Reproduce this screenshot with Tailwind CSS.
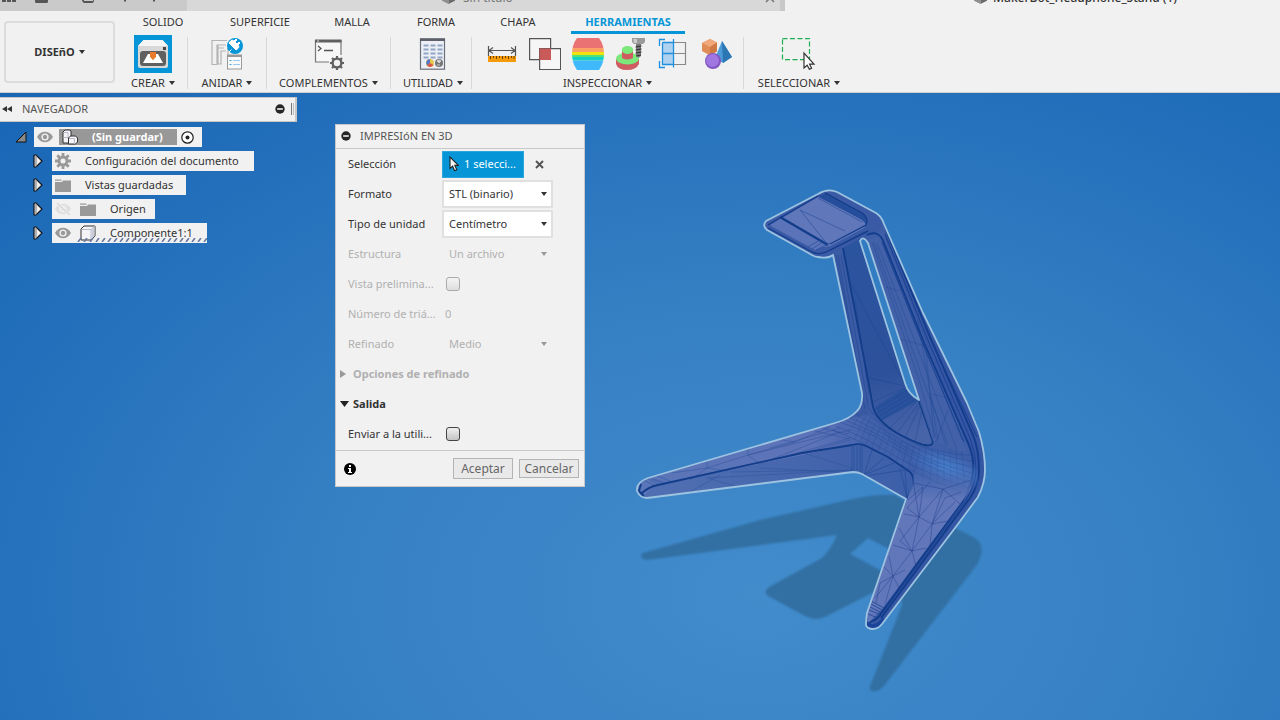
<!DOCTYPE html>
<html lang="es">
<head>
<meta charset="utf-8">
<meta name="viewport" content="width=device-width, initial-scale=1">
<title>Impresión en 3D</title>
<script src="https://cdn.jsdelivr.net/npm/@tailwindcss/browser@4"></script>
</head>
<body class="flex h-screen flex-col overflow-hidden bg-[#f1f1f1] font-['Noto_Sans','Open_Sans',sans-serif] text-[11px] leading-4 text-[#333]">

<!-- Shared symbols -->
<svg class="hidden" aria-hidden="true">
  <symbol id="caret" viewBox="0 0 6 4"><path d="M0 0h6L3 4z" fill="currentColor"/></symbol>
  <symbol id="eye" viewBox="0 0 16 12"><path d="M0 6C2 2.400 5 .8 8 .8s6 1.600 8 5.200c-2 3.600-5 5.200-8 5.200S2 9.600 0 6z" fill="currentColor"/><circle cx="8" cy="6" r="3.600" fill="#f1f1f1"/><circle cx="8" cy="6" r="2.200" fill="currentColor"/></symbol>
  <symbol id="folder" viewBox="0 0 16 13"><path d="M0 .5h6.500v1.300H0zM0 3h7l1-1.500h8V13H0z" fill="#999"/></symbol>
  <symbol id="expand" viewBox="0 0 10 14"><path d="M1 1.500Q1 1 2 1h1l6 6-6 6H2q-1 0-1-.5z" fill="#eee" stroke="#111" stroke-width="1.200"/><path d="M3 1.500v11" stroke="#777"/></symbol>
  <symbol id="minus" viewBox="0 0 10 10"><circle cx="5" cy="5" r="4.700" fill="#262626"/><path d="M2.200 5h5.600" stroke="#f1f1f1" stroke-width="1.600"/></symbol>
  <symbol id="pointer" viewBox="0 0 10 16"><path d="M1 1v11.500l2.600-2.300 2 4.600 2.200-1-2-4.400H9.400z" fill="#f4f4f4" stroke="#222" stroke-width="1.100"/></symbol>
  <symbol id="doc" viewBox="0 0 13 13"><path d="M6.500 6.500v6.500L0 9.800V3z" fill="#8f8f8f"/><path d="M6.500 6.500v6.500L13 9.800V3z" fill="#6b6b6b"/><path d="M6.500 0L13 3 6.500 6.500 0 3z" fill="#c2c2c2"/></symbol>
</svg>

<header class="shrink-0 border-b border-[#d0cfcc]">
  <!-- Document tabs, scrolled partly out of view -->
  <div class="flex h-[11px] items-end overflow-hidden text-xs">
    <div class="flex h-full w-[187px] items-start bg-[#cacaca] text-[#555]">
      <svg class="h-[5px] w-[187px]" viewBox="0 0 187 5" fill="currentColor"><path d="M2 0h4v2H2zM7 0h4v2H7zM12 0h4v2h-4zM35 0h13v1.500q0 1.500-1.500 1.500h-10Q35 3 35 1.500zM82 0h2v1h9V0h1q0 3-2 3h-8q-2-1-2-3zM124 0h2v1.500h-2zM153 0h2v1.500h-2z"/></svg>
    </div>
    <div class="flex h-full w-[593px] items-end justify-between bg-[#d8d8d8] pr-[5px] pl-[255px] text-[#777]">
      <a href="#" class="flex items-center gap-2 whitespace-nowrap leading-[27px]"><svg class="size-[13px]"><use href="#doc"/></svg>Sin título</a>
      <button class="leading-[27px]" aria-label="Cerrar"><svg class="mb-2 block size-[10px]" viewBox="0 0 10 10" stroke="#777" stroke-width="1.500"><path d="M1 1l8 8M9 1L1 9"/></svg></button>
    </div>
    <div class="h-full w-[5px] bg-[#c8c8c8]"></div>
    <div class="flex h-full flex-1 items-end pl-[189px]"><a href="#" class="flex items-center gap-[6px] whitespace-nowrap leading-[27px] font-medium"><svg class="size-[13px]"><use href="#doc"/></svg>MakerBot_Headphone_Stand (1)</a></div>
  </div>

  <div class="flex">
    <button class="mt-[10px] ml-1 flex h-[62px] w-[111px] shrink-0 items-center justify-center gap-1 rounded-[4px] border-2 border-[#dcdcdc] pb-px font-bold">DISEñO<svg class="h-1 w-[6px]"><use href="#caret"/></svg></button>
    <div class="flex-1">
      <nav class="flex h-[23px] gap-[22px] pl-4 whitespace-nowrap">
        <a href="#" class="w-16 pt-[3px] text-center">SOLIDO</a>
        <a href="#" class="w-[86px] pt-[3px] text-center">SUPERFICIE</a>
        <a href="#" class="w-[54px] pt-[3px] text-center">MALLA</a>
        <a href="#" class="w-[70px] pt-[3px] text-center">FORMA</a>
        <a href="#" class="w-[50px] pt-[3px] text-center">CHAPA</a>
        <a href="#" class="ml-[6px] w-[114px] border-b-[3px] border-[#0696d7] pt-[3px] text-center font-bold text-[#0696d7]">HERRAMIENTAS</a>
      </nav>

      <div class="flex h-[58px] pl-1">
        <section class="flex w-[68px] flex-col items-center justify-between pb-px">
          <button class="mt-px size-[38px] bg-[#0696d7]" aria-label="Impresión en 3D"><svg viewBox="0 0 38 38"><path d="M9.500 5h19L34 11v20q0 2-2 2H6q-2 0-2-2V11z" fill="#d8d8d8"/><path d="M9.500 5h19L34 11H4z" fill="#f6f6f6"/><rect x="6" y="16" width="26" height="15" rx="3" fill="#606060"/><rect x="29" y="12" width="3" height="3" fill="#444"/><path d="M9 28l5-9h2l3 6 3-6h2l5 9z" fill="#fff"/><path d="M16 17h6v5l-3 3-3-3z" fill="#e87a2a"/></svg></button>
          <button class="flex items-center gap-1">CREAR<svg class="h-1 w-[6px]"><use href="#caret"/></svg></button>
        </section>
        <div class="my-[3px] w-px bg-[#d8d8d8]"></div>
        <section class="flex w-[78px] flex-col items-center justify-between pb-px">
          <button class="mt-1 size-8" aria-label="Anidar"><svg viewBox="0 0 32 32" fill="none"><path d="M16 2.500H1v24h5V7h9M7 26.500V7.500M13 10H7v16h3V13h5M17 10v13" stroke="#b4b4b4" stroke-width="1.200"/><rect x="16.500" y="17" width="14" height="14" fill="#fafafa" stroke="#999"/><path d="M16.500 18h14" stroke="#999" stroke-width="2"/><path d="M18.500 22.500h2M18.500 26.500h2" stroke="#40a0e0"/><path d="M22 22.500h7M22 26.500h7" stroke="#9cc8ee"/><circle cx="24" cy="8" r="8" fill="#0696d7"/><path d="M18 14l2.500-2.500M20 7l5 5q2-1 3-3l-1-2 2-2-1-1-2 2-2-2 2-2-1-1-2 2-2-1q-2 1-3 3z" fill="#fff" stroke="#fff"/></svg></button>
          <button class="flex items-center gap-1">ANIDAR<svg class="h-1 w-[6px]"><use href="#caret"/></svg></button>
        </section>
        <div class="my-[3px] w-px bg-[#d8d8d8]"></div>
        <section class="flex w-[123px] flex-col items-center justify-between pb-px">
          <button class="mt-1 size-8" aria-label="Secuencias de comandos y complementos"><svg viewBox="0 0 32 32" fill="none"><path d="M16 24H2.500V2.500h25.500V17" fill="#f7f7f7" stroke="#777" stroke-width="1.200"/><path d="M2 3h26.500" stroke="#606060" stroke-width="3"/><path d="M4 3h2" stroke="#ddd"/><path d="M5 8l3 2.500L5 13M11 12.500h9" stroke="#555" stroke-width="1.300"/><circle cx="24" cy="25" r="4.400" fill="#f1f1f1" stroke="#606060" stroke-width="2.400"/><path d="M24 18v2.500M24 29.500V32M17 25h2.500M28.500 25H31M19 20l1.800 1.800M27.200 28.200L29 30M29 20l-1.800 1.800M20.800 28.200L19 30" stroke="#606060" stroke-width="2.200"/></svg></button>
          <button class="flex items-center gap-1">COMPLEMENTOS<svg class="h-1 w-[6px]"><use href="#caret"/></svg></button>
        </section>
        <div class="my-[3px] w-px bg-[#d8d8d8]"></div>
        <section class="flex w-20 flex-col items-center justify-between pb-px pl-1">
          <button class="mt-1 size-8" aria-label="Utilidad"><svg viewBox="0 0 32 32"><rect x="3.500" y=".7" width="24" height="30.500" fill="#eceff5" stroke="#6b6f78" stroke-width="1.200"/><path d="M3 2h25" stroke="#5d6068" stroke-width="2"/><path d="M6.500 7.500h20M6.500 11.500h20M6.500 15.500h20M6.500 19.500h20" stroke="#93a5c6" stroke-width="1.800" stroke-dasharray="5 2"/><circle cx="13" cy="25" r="4" fill="#e8c84c"/><path d="M13 25v-4a4 4 0 0 0-3 6.500z" fill="#5578c8"/><path d="M13 25l3.500 2a4 4 0 0 1-6.500.5z" fill="#d8574c"/><circle cx="22" cy="25" r="4" fill="#777"/><path d="M20 23q2-2 4 0l-2 2zM20 27h3" fill="#ddd" stroke="#ccc"/></svg></button>
          <button class="flex items-center gap-1">UTILIDAD<svg class="h-1 w-[6px]"><use href="#caret"/></svg></button>
        </section>
        <div class="my-[3px] w-px bg-[#d8d8d8]"></div>
        <section class="flex w-[271px] flex-col items-center justify-between pb-px">
          <div class="mt-1 flex gap-[11px] pl-1">
            <button class="size-8" aria-label="Medir"><svg viewBox="0 0 32 32" fill="none"><path d="M2.500 8v10M29.500 8v10M3 12.500h26M7 9.500l-4 3 4 3M25 9.500l4 3-4 3" stroke="#555" stroke-width="1.200"/><path d="M2 18h28v6H2z" fill="#f59b0b"/><path d="M4.500 18v3M7.500 18v2M10.500 18v3M13.500 18v2M16.500 18v3M19.500 18v2M22.500 18v3M25.500 18v2M28 18v3" stroke="#6b4300"/></svg></button>
            <button class="size-8" aria-label="Interferencia"><svg viewBox="0 0 32 32"><path d="M.6.6h21v21H.6z" fill="#f6f6f6" stroke="#555" stroke-width="1.200"/><path d="M10.600 10.600h21v21h-21z" fill="#f6f6f6" stroke="#555" stroke-width="1.200"/><path d="M10.500 10.500H22V22H10.500z" fill="#c95a5a"/></svg></button>
            <button class="size-8" aria-label="Análisis de curvatura"><svg viewBox="0 0 32 32"><clipPath id="barrel"><path d="M5 0h22q5 7 5 16t-5 16H5Q0 25 0 16T5 0z"/></clipPath><g clip-path="url(#barrel)"><path d="M0 0h32v10H0z" fill="#ea7272"/><path d="M0 10h32v4H0z" fill="#fda163"/><path d="M0 14h32v3H0z" fill="#f0e20c"/><path d="M0 17h32v2H0z" fill="#50e07a"/><path d="M0 19h32v3.500H0z" fill="#12d3c3"/><path d="M0 22.500h32V32H0z" fill="#40b8fc"/></g></svg></button>
            <button class="size-8" aria-label="Análisis de sección"><svg viewBox="0 0 32 32"><path d="M1 21v5q2 6 11 6t12-6v-5z" fill="#cf5c60"/><ellipse cx="12.500" cy="20.500" rx="11.500" ry="6" fill="#7be87b"/><path d="M7 12v8q5 3 11 0v-8z" fill="#cf5c60"/><ellipse cx="12.500" cy="12" rx="5.800" ry="4" fill="#7be87b"/><path d="M17 0h13v4l-2 2h-9l-2-2z" fill="#9a9a9a"/><path d="M21 6h5v12l-2.500 2-2.500-2z" fill="#777"/><path d="M20.500 9l6-1M20.500 12l6-1M20.500 15l6-1M21 18l5-1" stroke="#333"/><path d="M18 1h4v4h-3z" fill="#ccc"/></svg></button>
            <button class="size-8" aria-label="Plano de simetría"><svg viewBox="0 0 32 32" fill="none"><path d="M4.500 4.500h11v22h-11z" fill="#aed2f0"/><path d="M16 4.500h11.500v22H16M16 15.500h11.500" stroke="#888" stroke-width="1.200"/><path d="M4.500 4.500h11M4.500 4.500v22h11M4.500 15.500h11M15.500 1v28.500M7 1.500H1.500V8M7 29.500H1.500V23" stroke="#1f8fe0" stroke-width="1.300"/></svg></button>
            <button class="size-8" aria-label="Propiedades"><svg viewBox="0 0 32 32"><path d="M9 1l7 3.500v9L8 17l-7-4V5z" fill="#e08c56"/><path d="M9 1l7 3.500L9 9 1 5z" fill="#f0a87a"/><path d="M9 9v8l7-3.500v-9z" fill="#cf7a44"/><path d="M21 3l10 16-9 6-8-5z" fill="#4b9bd8"/><path d="M21 3l10 16-9 6z" fill="#2d76b4"/><circle cx="12" cy="23" r="8" fill="#8255c0"/><circle cx="11.500" cy="22.500" r="6.500" fill="#a076e0"/></svg></button>
          </div>
          <button class="flex items-center gap-1">INSPECCIONAR<svg class="h-1 w-[6px]"><use href="#caret"/></svg></button>
        </section>
        <div class="my-[3px] w-px bg-[#d8d8d8]"></div>
        <section class="flex w-[110px] flex-col items-center justify-between pb-px">
          <button class="mt-1 h-8 w-9" aria-label="Seleccionar"><svg viewBox="0 0 36 32" fill="none"><path d="M1.500.6h27v21h-27z" stroke="#1fae50" stroke-width="1.200" stroke-dasharray="5 2.500"/><path d="M23 15v15l3.200-2.700 2.200 4 2.200-1.100-2-4H33z" fill="#fff" stroke="#333" stroke-width="1.200"/></svg></button>
          <button class="flex items-center gap-1">SELECCIONAR<svg class="h-1 w-[6px]"><use href="#caret"/></svg></button>
        </section>
      </div>
    </div>
  </div>
</header>

<main class="relative min-h-0 flex-1 overflow-hidden bg-[radial-gradient(ellipse_76%_104%_at_59%_80%,#428ccc_0%,#357fc3_45%,#226eba_85%,#1564b4_115%)]">

  <!-- 3D model view -->
  <svg class="absolute inset-0 h-full w-full" viewBox="0 93 1280 627" aria-label="Soporte para auriculares" fill="none">
    <defs>
      <linearGradient id="inner" x1="850" y1="250" x2="900" y2="440" gradientUnits="userSpaceOnUse"><stop stop-color="#2b549f"/><stop offset=".65" stop-color="#2d519b"/><stop offset="1" stop-color="#4864a9"/></linearGradient>
      <linearGradient id="under" x1="660" y1="490" x2="910" y2="470" gradientUnits="userSpaceOnUse"><stop stop-color="#506fb2"/><stop offset="1" stop-color="#3d5fa9"/></linearGradient>
      <radialGradient id="shine" cx="0" cy="0" r="1" gradientUnits="userSpaceOnUse" gradientTransform="translate(948 468) rotate(20) scale(42 16)"><stop stop-color="#4880cb"/><stop offset="1" stop-color="#4880cb" stop-opacity="0"/></radialGradient>
      <linearGradient id="top" x1="640" y1="0" x2="870" y2="0" gradientUnits="userSpaceOnUse"><stop stop-color="#5a75b8"/><stop offset=".75" stop-color="#5d73b8"/><stop offset="1" stop-color="#4362ac"/></linearGradient>
      <linearGradient id="front" x1="0" y1="465" x2="0" y2="500" gradientUnits="userSpaceOnUse"><stop stop-color="#4d70b6" stop-opacity="0"/><stop offset="1" stop-color="#6177ba"/></linearGradient>
      <filter id="soft"><feGaussianBlur stdDeviation="0.9"/></filter>
      <clipPath id="body"><path clip-rule="evenodd" d="M766 221L818 194Q828 188 837 192L876 213Q882 217 884 224L923 313 967 403 979 432Q985 452 985 470 985 483 978 497L955 528 882 624Q878 629 873 629 867 629 866 625 866 620 867 613L906 499 862 474Q858 472 853 472L647 498Q640 498 637 491 636 482 648 478L835 423Q850 419 857 411 863 405 862 393L833 255Q828 259 818 257 815 257 812 255L767 230Q762 226 766 221zM860 241Q863 235 868 243L919 400Q908 394 905 383z"/></clipPath>
    </defs>

    <g fill="#336fa3" filter="url(#soft)">
      <path fill-rule="evenodd" d="M641 555Q643 552 650 551L760 520 848 500Q875 494 895 495L955 528 975 538Q984 544 981 555 980 560 976 566L884 686Q878 693 872 691 868 690 871 684L902 605 900 580 878 590 827 616Q816 622 805 616L768 596Q763 592 769 587L822 558Q832 548 837 535L647 560Q641 559 641 555zM868 538L850 554 882 571 893 551z"/>
    </g>

    <g clip-path="url(#body)">
      <path d="M630 180h370v460H630z" fill="#3e5ea8"/>
      <!-- headrest -->
      <path d="M764 225L829 188 885 218 880 230 822 258z" fill="#3a5aa5"/>
      <path d="M770 225L818 197 863 220Q868 224 864 228L830 246Q824 248 818 244z" fill="#6077ba"/>
      <path d="M780 217L828 245 815 250 771 226z" fill="#5b73b8"/>
      <path d="M818 196L827 193 864 214Q869 219 866 224L862 220z" fill="#264f9c"/>
      <path d="M780 217L828 245" stroke="#123d8b" stroke-width="2.400"/>
      <path d="M768 225L818 196M825 193L862 213Q869 218 866 225L830 244M768 228L812 252Q820 256 830 250L868 231" stroke="#143d8b" stroke-width="1.400"/>
      <path d="M800 210L845 231M800 210L828 245M818 198L862 222M820 196L864 220M822 195L865 218M816 250L830 243M812 249L824 241M808 247L820 240" stroke="#244b98" stroke-width=".6"/>
      <!-- left upright -->
      <path d="M833 252L843 247 871 407 876 415 862 420 850 412z" fill="#3b5ba5"/>
      <path d="M843 248L861 238 907 388 920 402 933 441Q931 447 921 445 885 433 873 408z" fill="url(#inner)"/>
      <path d="M875 407L906 387 918 401 881 421z" fill="#244f9b" opacity=".75"/>
      <path d="M838 255L865 410M841 255L868 405M836 255L862 395" stroke="#17428f" stroke-width=".7" opacity=".6"/>
      <path d="M843 248L862 348 873 407Q877 421 897 433 913 442 924 445 935 447 932 439L919 401" stroke="#113c88" stroke-width="1.800"/>
      <path d="M849 280L904 383M855 300L869 395M870 378L905 386M872 402L904 388M875 410L908 390M876 414L911 393M878 417L913 396M880 420L916 399M890 428L916 402M897 433L919 403M905 438L920 405M915 442L922 410" stroke="#1c438f" stroke-width=".6" opacity=".7"/>
      <!-- right upright -->
      <path d="M868 240L880 236 925 345 968 455 933 441 919 400z" fill="#4261a9"/>
      <path d="M884 220L886 240 927 345 968 443Q974 456 974 472 974 488 962 504L873 623 882 630 990 495 990 450z" fill="#3556a3"/>
      <path d="M867 235Q879 229 884 243L925 345 968 443Q974 456 973 470 973 483 962 502L882 612Q877 621 867 623M887 232L930 337 973 435Q979 450 979 470 979 485 970 498L881 618" stroke="#123d8b" stroke-width="1.900"/>
      <path d="M884 225L933 345 977 437M885 234L927 338 970 438Q976 453 976 470 976 484 966 500L880 616M882 242L922 342 964 442" stroke="#15408f" stroke-width=".9"/>
      <path d="M872 242L919 380 936 437M874 242L925 385 948 445M877 243L922 360 957 450M875 270L930 430M886 287L899 291M900 339L925 346M932 394L952 399M918 320L938 440M926 350L934 438M940 385L962 440M948 410L936 442M930 394L946 446" stroke="#1d4592" stroke-width=".6" opacity=".6"/>
      <!-- left leg -->
      <path d="M636 485L650 477 836 422 870 414 915 475 888 458 860 444 852 445 658 485 643 498z" fill="url(#top)"/>
      <path d="M643 498Q649 489 658 485L852 445 862 444 888 458 912 475 913 483 908 501 862 474z" fill="url(#under)"/>
      <path d="M653 479L668 483M651 479L664 484M648 479L660 485M645 481L656 486M658 476L672 482M672 473L707 468 690 480M707 468L707 462M707 468L728 471M707 468L748 455 760 464M748 455L748 449M748 455L795 442 830 427M795 442L776 439M770 448L840 428M760 464L840 432M748 455L850 430M780 458L850 438M707 478L853 470M730 472L853 470M760 468L840 472M803 453L852 468M720 475L690 492M707 478L735 486M803 453L850 440M815 431L850 439M822 428L848 434" stroke="#2b509b" stroke-width=".6" opacity=".75"/>
      <path d="M641 494Q648 487 658 485L802 453 852 445Q860 443 866 446L888 457 910 472Q914 476 913 483L907 500M641 484L639 491 644 496" stroke="#123d8b" stroke-width="1.800"/>
      <path d="M852 446v27M854 446v27M857 446v27M860 446v27M862 446v28M864 475L872 450M864 475L884 458M864 475L894 463M866 476L904 470M907 498L900 468M907 498L905 470" stroke="#1c4591" stroke-width=".7" opacity=".75"/>
      <!-- hub -->
      <path d="M900 440L975 435 980 500 900 490z" fill="url(#shine)"/>
      <g stroke="#173f8c" stroke-width=".6" opacity=".5">
        <path d="M840 422Q870 432 895 448T970 483M845 420Q872 430 898 446T972 478M850 418Q876 428 902 445T972 473M856 414Q880 428 906 443T972 467M862 410Q882 426 910 441T972 461M836 426Q866 438 890 453T968 488M832 430Q862 441 885 456T966 494M865 404Q880 426 912 441T971 455"/>
        <path d="M862 412L848 434M866 415L854 440M870 418L860 442M875 423L866 444M880 427L872 448M885 432L878 451M890 435L884 455M896 438L890 458M902 441L896 462M908 444L902 466M914 446L908 470M920 448L914 476M926 449L922 478M932 449L930 482M938 449L937 484M944 450L944 486M950 450L951 488M956 450L958 490M962 451L965 492" stroke-dasharray="3 1"/>
      </g>
      <!-- right leg -->
      <path d="M913 478L918 460 973 465 971 489 960 504 882 609 868 623 867 613 907 500z" fill="url(#front)"/>
      <path d="M919 517L907 508M919 517L904 514M919 517L913 480M919 517L923 487M919 517L943 489M919 517L932 524M919 517L912 551M919 517L900 541M932 524L945 498M932 524L948 521M932 524L912 551M932 524L929 556M932 524L955 502M943 489L960 504M943 489L971 480M945 498L961 492M912 551L900 541M912 551L893 545M912 551L893 576M912 551L917 570M912 551L926 548M893 576L889 556M893 576L884 567M893 576L880 583M893 576L875 598M893 576L885 604M893 576L900 590M893 576L905 570M913 483L943 489M923 487L908 500M880 583L876 603M907 508L930 482M899 528L912 551M943 489L932 524" stroke="#243f8d" stroke-width=".6" opacity=".75"/>
      <path d="M871 601L886 609M871 604L884 611M870 607L882 613M869 610L881 615M868 614L878 618" stroke="#163f8d" stroke-width=".7"/>
      <path d="M867 624Q876 630 884 619" stroke="#1b439a" stroke-width="4"/>
    </g>
    <g stroke="#9dc3e0" stroke-width="1.800" stroke-linejoin="round">
      <path d="M766 221L818 194Q828 188 837 192L876 213Q882 217 884 224L923 313 967 403 979 432Q985 452 985 470 985 483 978 497L955 528 882 624Q878 629 873 629 867 629 866 625 866 620 867 613L906 499 862 474Q858 472 853 472L647 498Q640 498 637 491 636 482 648 478L835 423Q850 419 857 411 863 405 862 393L833 255Q828 259 818 257 815 257 812 255L767 230Q762 226 766 221z"/>
      <path d="M860 241Q863 235 868 243L919 400Q908 394 905 383z"/>
    </g>
  </svg>

  <!-- Browser panel -->
  <aside class="absolute top-1 left-0 w-[297px]">
    <div class="flex h-[25px] items-center border-y border-r-2 border-[#c9c7c4] bg-[#f1f1f1] pb-px text-[#555]">
      <button class="ml-[2px] w-5" aria-label="Contraer"><svg class="h-[6px] w-[10px]" viewBox="0 0 10 6" fill="#333"><path d="M5 0v6L0 3zM10 0v6L5 3z"/></svg></button>
      <h2>NAVEGADOR</h2>
      <button class="ml-auto" aria-label="Minimizar"><svg class="size-[10px]"><use href="#minus"/></svg></button>
      <span class="mr-px ml-[6px] h-3 w-[3px] border-r border-l border-r-[#bbb] border-l-[#777]"></span>
    </div>
    <ul class="mt-[5px] flex flex-col items-start gap-1 whitespace-nowrap">
      <li class="flex items-center pl-[15px]">
        <button class="w-[19px]" aria-label="Contraer nodo"><svg class="size-3" viewBox="0 0 12 12"><path d="M11 1v10H1z" fill="#888" stroke="#111"/></svg></button>
        <div class="flex h-5 w-[168px] items-center bg-[#f1f1f1]">
          <svg class="ml-[3px] h-3 w-4 text-[#999]"><use href="#eye"/></svg>
          <div class="ml-[6px] flex h-4 w-[118px] items-center bg-[#989898] font-bold text-white">
            <svg class="ml-[3px] size-4 shrink-0" viewBox="0 0 16 16" fill="#f3f3f8" stroke="#333"><path d="M1 3l2-2h5l1 1v5l-2 7H1z"/><path d="M1.500 3.500H6V9M1.500 8.500H6" fill="none" stroke="#b8bac8"/><path d="M6.500 9l2-2h5l2 2v4l-2 2h-7z"/><path d="M7 9.500h5.500V15" fill="none" stroke="#b8bac8"/></svg>
            <span class="ml-[14px]">(Sin guardar)</span>
          </div>
          <svg class="ml-1 size-[13px]" viewBox="0 0 13 13"><circle cx="6.500" cy="6.500" r="5.700" fill="#fff" stroke="#222" stroke-width="1.200"/><circle cx="6.500" cy="6.500" r="2" fill="#222"/></svg>
        </div>
      </li>
      <li class="flex items-center pl-[33px]">
        <button class="w-[19px]" aria-label="Expandir nodo"><svg class="h-[14px] w-[10px]"><use href="#expand"/></svg></button>
        <div class="flex h-5 w-[202px] items-center gap-[14px] bg-[#f1f1f1] pl-[3px]">
          <svg class="size-4 shrink-0" viewBox="0 0 16 16" fill="none" stroke="#999"><circle cx="8" cy="8" r="4" stroke-width="3"/><path d="M8 0v3M8 13v3M0 8h3M13 8h3M2.300 2.300l2.200 2.200M11.500 11.500l2.200 2.200M13.700 2.300l-2.200 2.200M4.500 11.500l-2.200 2.200" stroke-width="2.800"/></svg>
          Configuración del documento
        </div>
      </li>
      <li class="flex items-center pl-[33px]">
        <button class="w-[19px]" aria-label="Expandir nodo"><svg class="h-[14px] w-[10px]"><use href="#expand"/></svg></button>
        <div class="flex h-5 w-[134px] items-center gap-[14px] bg-[#f1f1f1] pl-[3px]"><svg class="h-[13px] w-4 shrink-0"><use href="#folder"/></svg>Vistas guardadas</div>
      </li>
      <li class="flex items-center pl-[33px]">
        <button class="w-[19px]" aria-label="Expandir nodo"><svg class="h-[14px] w-[10px]"><use href="#expand"/></svg></button>
        <div class="flex h-5 w-[103px] items-center bg-[#f1f1f1] pl-[3px]">
          <svg class="h-3 w-4 text-[#dedede]" viewBox="0 0 16 12"><use href="#eye"/><path d="M2 0l13 12" stroke="#f1f1f1" stroke-width="3"/><path d="M2 0l13 12" stroke="#d8d8d8" stroke-width="1.500"/></svg>
          <svg class="ml-[9px] h-[13px] w-4"><use href="#folder"/></svg><span class="ml-[14px]">Origen</span>
        </div>
      </li>
      <li class="flex items-center pl-[33px]">
        <button class="w-[19px]" aria-label="Expandir nodo"><svg class="h-[14px] w-[10px]"><use href="#expand"/></svg></button>
        <div class="relative flex h-5 w-[155px] items-center bg-[#f1f1f1] pl-[3px]">
          <svg class="h-3 w-4 text-[#999]"><use href="#eye"/></svg>
          <svg class="ml-[9px] size-4" viewBox="0 0 16 16"><path d="M1 4l3-3h11v10l-4 4H1z" fill="#f3f3f8" stroke="#333"/><path d="M1.500 4.500H11V14M11 4.500L15 1" fill="none" stroke="#b8bac8"/><path d="M11.500 5L14.500 2v9l-3 3z" fill="#c9cdda"/></svg>
          <span class="ml-[14px]">Componente1:1</span>
          <svg class="absolute right-0 bottom-px h-1 w-[130px]" aria-hidden="true"><defs><pattern id="hatch" width="6" height="4" patternUnits="userSpaceOnUse"><path d="M1 4l3-4" stroke="#66789e" stroke-width="1.600"/></pattern></defs><rect width="130" height="4" fill="url(#hatch)"/></svg>
        </div>
      </li>
    </ul>
  </aside>

  <!-- 3D print dialog -->
  <form class="absolute top-[31px] left-[335px] w-[250px] border border-[#c8c8c8] bg-[#f1f1f1]">
    <div class="flex h-6 items-center gap-[9px] border-b border-[#c8c8c8] pb-px pl-[5px] text-[#555]"><button type="button" aria-label="Minimizar"><svg class="block size-[10px]"><use href="#minus"/></svg></button><h2>IMPRESIóN EN 3D</h2></div>
    <div class="grid auto-rows-[30px] grid-cols-[94px_1fr] items-center pl-3 whitespace-nowrap">
      <span id="sel">Selección</span>
      <div class="flex items-center gap-[11px]">
        <button type="button" aria-labelledby="sel" class="flex h-[27px] w-[82px] items-center gap-[5px] border border-[#2ba5de] bg-[#0696d7] pl-[6px] text-white"><svg class="h-4 w-[10px]"><use href="#pointer"/></svg>1 selecci...</button>
        <button type="button" aria-label="Borrar selección"><svg class="block size-[9px]" viewBox="0 0 9 9" stroke="#555" stroke-width="2"><path d="M1 1l7 7M8 1L1 8"/></svg></button>
      </div>
      <label for="fmt">Formato</label>
      <div class="relative w-[111px]"><select id="fmt" class="block h-7 w-full appearance-none border-2 border-[#e0e0e0] bg-white pl-[5px]"><option>STL (binario)</option></select><svg class="pointer-events-none absolute top-3 right-[6px] h-1 w-[6px]"><use href="#caret"/></svg></div>
      <label for="unit">Tipo de unidad</label>
      <div class="relative w-[111px]"><select id="unit" class="block h-7 w-full appearance-none border-2 border-[#e0e0e0] bg-white pl-[5px]"><option>Centímetro</option></select><svg class="pointer-events-none absolute top-3 right-[6px] h-1 w-[6px]"><use href="#caret"/></svg></div>
      <label for="struct" class="text-[#b0b0b0]">Estructura</label>
      <div class="relative w-[111px] text-[#b0b0b0]"><select id="struct" disabled class="block h-7 w-full appearance-none border-2 border-transparent pl-[5px] opacity-100"><option>Un archivo</option></select><svg class="pointer-events-none absolute top-3 right-[6px] h-1 w-[6px] text-[#999]"><use href="#caret"/></svg></div>
      <label for="prev" class="text-[#b0b0b0]">Vista prelimina...</label>
      <input id="prev" type="checkbox" disabled class="ml-1 size-[14px] appearance-none rounded-[3px] border border-[#aaa] bg-linear-to-b from-[#f4f4f4] to-[#dedede]">
      <label for="tri" class="text-[#b0b0b0]">Número de triá...</label>
      <output id="tri" class="pl-[3px] text-[#b0b0b0]">0</output>
      <label for="ref" class="text-[#b0b0b0]">Refinado</label>
      <div class="relative w-[111px] text-[#b0b0b0]"><select id="ref" disabled class="block h-7 w-full appearance-none border-2 border-transparent pl-[5px] opacity-100"><option>Medio</option></select><svg class="pointer-events-none absolute top-3 right-[6px] h-1 w-[6px] text-[#999]"><use href="#caret"/></svg></div>
      <button type="button" disabled class="col-span-2 -ml-2 flex items-center gap-[7px] font-bold text-[#b0b0b0]"><svg class="h-2 w-[6px]" viewBox="0 0 6 8"><path d="M0 0v8l6-4z" fill="#999"/></svg>Opciones de refinado</button>
      <button type="button" class="col-span-2 -ml-2 flex items-center gap-1 font-bold"><svg class="h-[6px] w-[9px]" viewBox="0 0 9 6"><path d="M0 0h9L4.500 6z" fill="#222"/></svg>Salida</button>
      <label for="send">Enviar a la utili...</label>
      <input id="send" type="checkbox" class="ml-1 size-[14px] appearance-none rounded-[3px] border border-[#444] bg-linear-to-b from-[#f0f0f0] to-[#c4c4c4]">
    </div>
    <div class="mt-px flex h-9 items-center gap-[6px] border-t border-[#c8c8c8] pr-[5px] pl-2 text-[#666]">
      <svg class="mr-auto size-3" viewBox="0 0 12 12"><circle cx="6" cy="6" r="6" fill="#000"/><path d="M5 2h2v2H5zM4 5h3v4h1v1H4V9h1V6H4z" fill="#fff"/></svg>
      <button type="submit" class="h-[21px] w-[60px] border border-[#b4b4b4] bg-[#e9e9e9] text-xs">Aceptar</button>
      <button type="button" class="h-[19px] w-[60px] border border-[#b4b4b4] bg-[#e9e9e9] text-xs leading-4">Cancelar</button>
    </div>
  </form>
</main>
</body>
</html>
